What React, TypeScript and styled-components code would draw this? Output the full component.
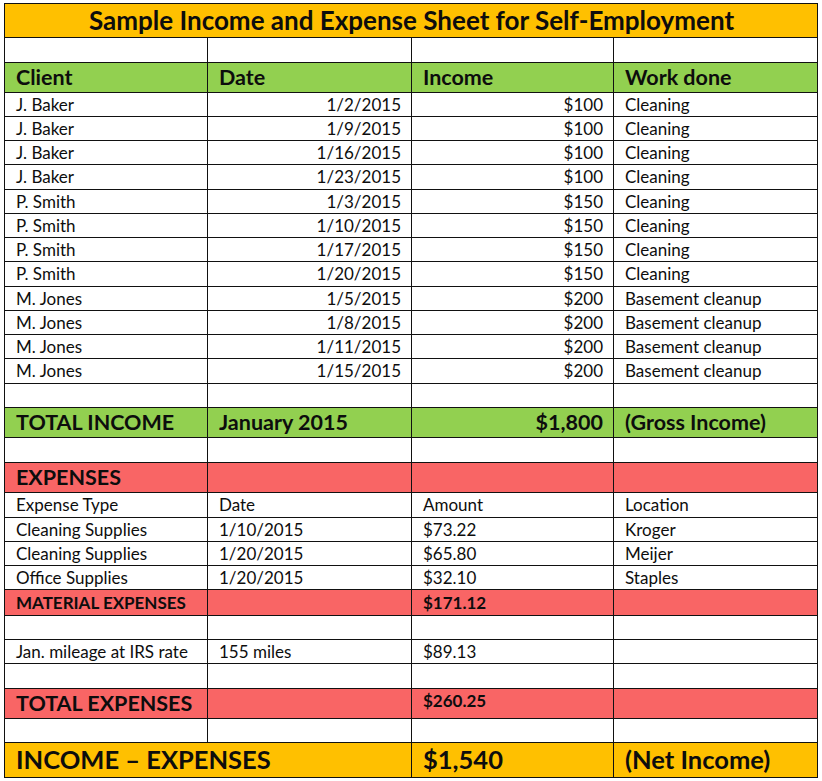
import React from "react";
import styled, { createGlobalStyle, css } from "styled-components";

const Global = createGlobalStyle`
  html, body { margin: 0; padding: 0; background: #fff; }
  body { font-family: Lato, "Open Sans", "Liberation Sans", sans-serif; color: #0d0d0d; }
`;

const Page = styled.div`
  padding: 3px 5px 0 4px;
`;

const Sheet = styled.table`
  width: 813px;
  border-collapse: collapse;
  table-layout: fixed;
`;

type Tone = "white" | "gold" | "green" | "red";
const bg: Record<Tone, string> = {
  white: "#ffffff",
  gold: "#ffc000",
  green: "#92d050",
  red: "#f96565",
};

const Row = styled.tr<{ $h: number; $tone?: Tone }>`
  height: ${(p) => p.$h}px;
  background: ${(p) => bg[p.$tone || "white"]};
`;

type Size = "sm" | "md" | "lg" | "xl";
const sizes: Record<Size, string> = {
  sm: "17px",
  md: "21.5px",
  lg: "26px",
  xl: "25.5px",
};

const Cell = styled.td<{ $size?: Size; $bold?: boolean; $right?: boolean; $center?: boolean; $top?: boolean }>`
  border: 1.5px solid #111;
  padding: 0 10px 0 11px;
  font-size: ${(p) => sizes[p.$size || "sm"]};
  font-weight: ${(p) => (p.$bold ? 700 : 400)};
  text-align: ${(p) => (p.$right ? "right" : p.$center ? "center" : "left")};
  vertical-align: ${(p) => (p.$top ? "top" : "middle")};
  white-space: nowrap;
  overflow: hidden;
  line-height: 1.15;
  ${(p) =>
    p.$top &&
    css`
      padding-top: 2px;
    `}
`;

const Col = styled.col<{ $w: number }>`
  width: ${(p) => p.$w}px;
`;

const income = [
  ["J. Baker", "1/2/2015", "$100", "Cleaning"],
  ["J. Baker", "1/9/2015", "$100", "Cleaning"],
  ["J. Baker", "1/16/2015", "$100", "Cleaning"],
  ["J. Baker", "1/23/2015", "$100", "Cleaning"],
  ["P. Smith", "1/3/2015", "$150", "Cleaning"],
  ["P. Smith", "1/10/2015", "$150", "Cleaning"],
  ["P. Smith", "1/17/2015", "$150", "Cleaning"],
  ["P. Smith", "1/20/2015", "$150", "Cleaning"],
  ["M. Jones", "1/5/2015", "$200", "Basement cleanup"],
  ["M. Jones", "1/8/2015", "$200", "Basement cleanup"],
  ["M. Jones", "1/11/2015", "$200", "Basement cleanup"],
  ["M. Jones", "1/15/2015", "$200", "Basement cleanup"],
];

const expenses = [
  ["Cleaning Supplies", "1/10/2015", "$73.22", "Kroger"],
  ["Cleaning Supplies", "1/20/2015", "$65.80", "Meijer"],
  ["Office Supplies", "1/20/2015", "$32.10", "Staples"],
];

const Blank = ({ h }: { h: number }) => (
  <Row $h={h}>
    <Cell />
    <Cell />
    <Cell />
    <Cell />
  </Row>
);

export default function App() {
  return (
    <Page>
      <Global />
      <Sheet>
        <colgroup>
          <Col $w={203} />
          <Col $w={204} />
          <Col $w={202} />
          <Col $w={204} />
        </colgroup>
        <tbody>
          <Row $h={34} $tone="gold">
            <Cell colSpan={4} $size="lg" $bold $center>
              Sample Income and Expense Sheet for Self-Employment
            </Cell>
          </Row>
          <Blank h={25} />
          <Row $h={30} $tone="green">
            <Cell $size="md" $bold>Client</Cell>
            <Cell $size="md" $bold>Date</Cell>
            <Cell $size="md" $bold>Income</Cell>
            <Cell $size="md" $bold>Work done</Cell>
          </Row>
          {income.map((r, i) => (
            <Row key={i} $h={i % 4 === 3 ? 25 : 24}>
              <Cell>{r[0]}</Cell>
              <Cell $right>{r[1]}</Cell>
              <Cell $right>{r[2]}</Cell>
              <Cell>{r[3]}</Cell>
            </Row>
          ))}
          <Blank h={24} />
          <Row $h={30} $tone="green">
            <Cell $size="md" $bold>TOTAL INCOME</Cell>
            <Cell $size="md" $bold>January 2015</Cell>
            <Cell $size="md" $bold $right>$1,800</Cell>
            <Cell $size="md" $bold>(Gross Income)</Cell>
          </Row>
          <Blank h={25} />
          <Row $h={30} $tone="red">
            <Cell $size="md" $bold>EXPENSES</Cell>
            <Cell />
            <Cell />
            <Cell />
          </Row>
          <Row $h={25}>
            <Cell>Expense Type</Cell>
            <Cell>Date</Cell>
            <Cell>Amount</Cell>
            <Cell>Location</Cell>
          </Row>
          {expenses.map((r, i) => (
            <Row key={i} $h={24}>
              <Cell>{r[0]}</Cell>
              <Cell>{r[1]}</Cell>
              <Cell>{r[2]}</Cell>
              <Cell>{r[3]}</Cell>
            </Row>
          ))}
          <Row $h={26} $tone="red">
            <Cell $bold>MATERIAL EXPENSES</Cell>
            <Cell />
            <Cell $bold>$171.12</Cell>
            <Cell />
          </Row>
          <Blank h={24} />
          <Row $h={24}>
            <Cell>Jan. mileage at IRS rate</Cell>
            <Cell>155 miles</Cell>
            <Cell>$89.13</Cell>
            <Cell />
          </Row>
          <Blank h={25} />
          <Row $h={30} $tone="red">
            <Cell $size="md" $bold>TOTAL EXPENSES</Cell>
            <Cell />
            <Cell $bold $top>$260.25</Cell>
            <Cell />
          </Row>
          <Blank h={24} />
          <Row $h={35} $tone="gold">
            <Cell colSpan={2} $size="xl" $bold>INCOME – EXPENSES</Cell>
            <Cell $size="xl" $bold>$1,540</Cell>
            <Cell $size="xl" $bold>(Net Income)</Cell>
          </Row>
        </tbody>
      </Sheet>
    </Page>
  );
}
